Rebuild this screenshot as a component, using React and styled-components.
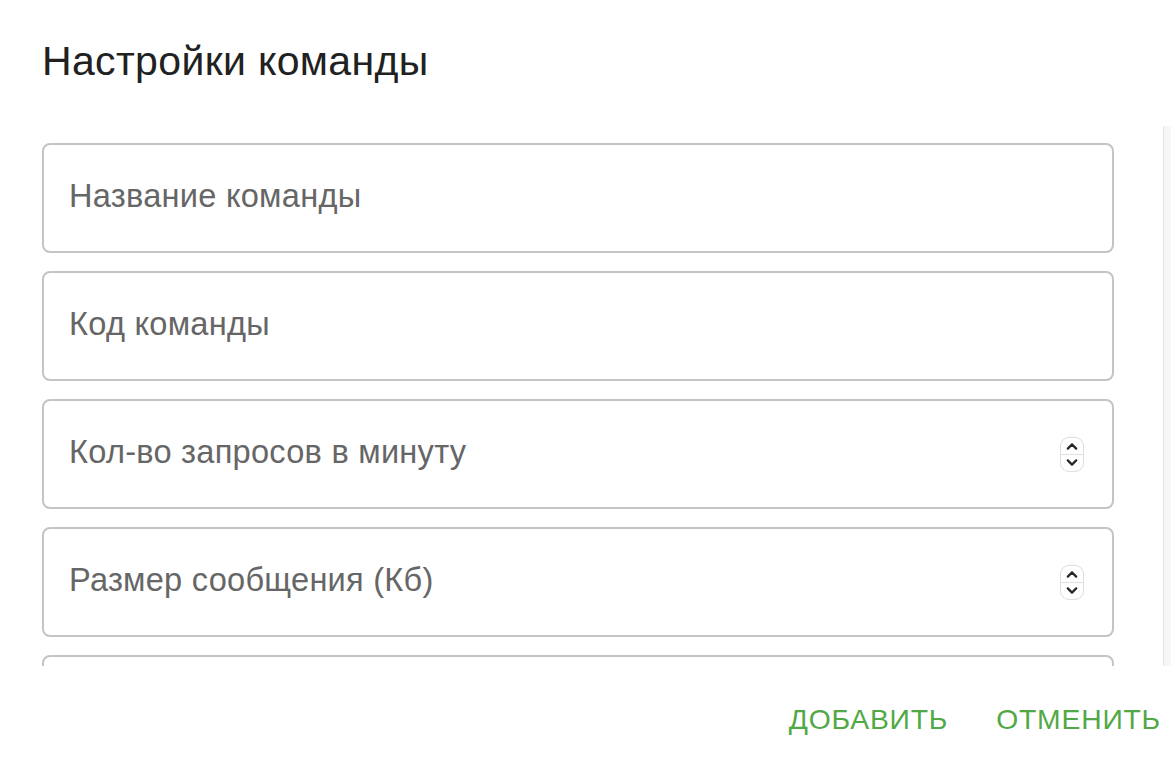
import React from 'react';
import styled, { createGlobalStyle } from 'styled-components';

const GlobalStyle = createGlobalStyle`
  html, body {
    margin: 0;
    padding: 0;
    background: #fff;
  }
  body {
    font-family: 'Liberation Sans', Arial, sans-serif;
  }
`;

const Dialog = styled.div`
  width: 1171px;
  height: 759px;
  display: flex;
  flex-direction: column;
  background: #fff;
  overflow: hidden;
`;

const Title = styled.h2`
  margin: 0;
  height: 126px;
  box-sizing: border-box;
  padding: 37px 0 0 42px;
  font-size: 41px;
  line-height: 48px;
  font-weight: 400;
  letter-spacing: 0.35px;
  color: #212121;
`;

// headless chrome hides native scrollbars, so the track is drawn with a border
const Content = styled.div`
  height: 540px;
  box-sizing: border-box;
  padding: 17px 0 0 42px;
  overflow-y: auto;
  display: flex;
  flex-direction: column;
  gap: 18px;
  border-right: 7px solid #f7f7f7;
  box-shadow: inset -1px 0 0 #e4e4e4;
  scrollbar-width: none;

  &::-webkit-scrollbar {
    display: none;
  }
`;

const Field = styled.label`
  flex: none;
  width: 1072px;
  height: 110px;
  box-sizing: border-box;
  border: 2px solid #c4c4c4;
  border-radius: 8px;
  display: flex;
  align-items: center;
  padding: 0 28px 4px 25px;
  gap: 12px;
`;

const Input = styled.input`
  flex: 1;
  min-width: 0;
  border: none;
  outline: none;
  background: transparent;
  padding: 0;
  font-family: 'Liberation Sans', Arial, sans-serif;
  font-size: 32.6px;
  letter-spacing: 0.25px;
  color: #212121;

  &::placeholder {
    color: #666;
    opacity: 1;
  }
`;

const Spinner = styled.span`
  width: 24px;
  height: 35px;
  box-sizing: border-box;
  margin-top: 4px;
  border: 1px solid #dedede;
  border-radius: 9px;
  display: flex;
  flex-direction: column;
  overflow: hidden;
`;

const SpinHalf = styled.span`
  flex: 1;
  display: flex;
  align-items: center;
  justify-content: center;
  & + & {
    border-top: 1px solid #e2e2e2;
  }
`;

const Footer = styled.div`
  flex: 1;
  display: flex;
  justify-content: flex-end;
  align-items: flex-start;
  gap: 32px;
  padding: 33px 2px 0 0;
`;

const TextButton = styled.button`
  border: none;
  background: transparent;
  padding: 0 8px;
  font-family: 'Liberation Sans', Arial, sans-serif;
  font-size: 28.3px;
  line-height: 40px;
  letter-spacing: 0.8px;
  font-weight: 400;
  text-transform: uppercase;
  color: #52a844;
  cursor: pointer;
`;

const Chevron = ({ up }) => (
  <svg width="12" height="8" viewBox="0 0 12 8">
    <path
      d={up ? 'M1.8 6.6 L6 2.4 L10.2 6.6' : 'M1.8 1.4 L6 5.6 L10.2 1.4'}
      fill="none"
      stroke="#262626"
      strokeWidth="2.2"
      strokeLinecap="round"
      strokeLinejoin="round"
    />
  </svg>
);

const fields = [
  { placeholder: 'Название команды' },
  { placeholder: 'Код команды' },
  { placeholder: 'Кол-во запросов в минуту', number: true },
  { placeholder: 'Размер сообщения (Кб)', number: true },
  { placeholder: 'Описание' }
];

const App = () => (
  <>
    <GlobalStyle />
    <Dialog>
      <Title>Настройки команды</Title>
      <Content>
        {fields.map(f => (
          <Field key={f.placeholder}>
            <Input placeholder={f.placeholder} />
            {f.number && (
              <Spinner>
                <SpinHalf>
                  <Chevron up />
                </SpinHalf>
                <SpinHalf>
                  <Chevron />
                </SpinHalf>
              </Spinner>
            )}
          </Field>
        ))}
      </Content>
      <Footer>
        <TextButton>Добавить</TextButton>
        <TextButton>Отменить</TextButton>
      </Footer>
    </Dialog>
  </>
);

export default App;
